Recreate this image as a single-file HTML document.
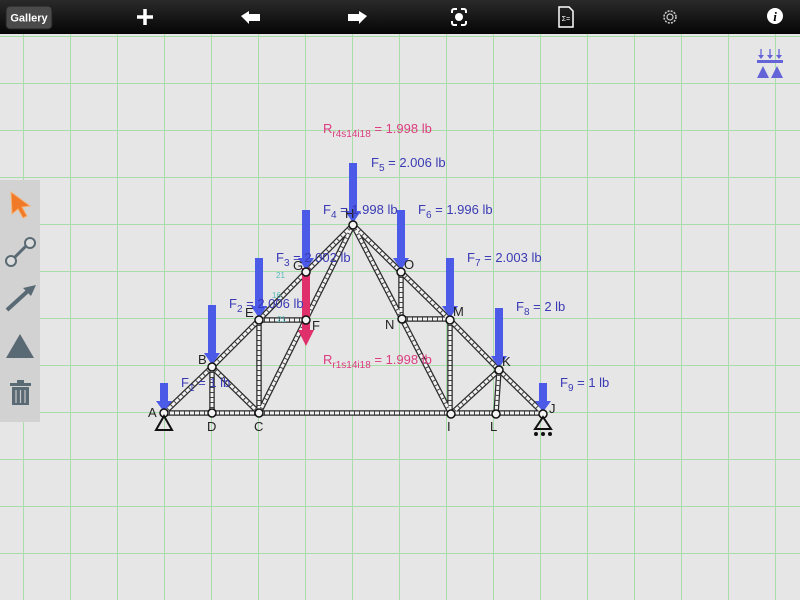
<!DOCTYPE html>
<html><head><meta charset="utf-8"><style>
html,body{margin:0;padding:0;width:800px;height:600px;overflow:hidden;background:#e6e6e6;font-family:"Liberation Sans",sans-serif}
</style></head><body>
<svg width="800" height="600" xmlns="http://www.w3.org/2000/svg" style="position:absolute;left:0;top:0">
<defs>
<linearGradient id="tb" x1="0" y1="0" x2="0" y2="1"><stop offset="0" stop-color="#2a2a2a"/><stop offset="1" stop-color="#050505"/></linearGradient>
<pattern id="grid" x="23" y="36" width="47" height="47" patternUnits="userSpaceOnUse">
<path d="M0.5 0V47M0 0.5H47" stroke="#a8dca8" stroke-width="1" fill="none"/></pattern>
</defs>
<rect width="800" height="600" fill="#e6e6e6"/>
<rect y="33" width="800" height="567" fill="url(#grid)"/>
<!-- toolbar -->
<rect width="800" height="34" fill="url(#tb)"/>
<rect x="6" y="6" width="46" height="23" rx="4" fill="#4a4a4a" stroke="#222"/>
<text x="29" y="21.5" fill="#fff" font-size="11" font-weight="bold" text-anchor="middle">Gallery</text>
<path d="M145 9v16M137 17h16" stroke="#fff" stroke-width="3.5"/>
<path d="M241 16l8-5v3h11v7h-11v3z" fill="#fff"/>
<path d="M367 16l-8-5v3h-11v7h11v3z" fill="#fff"/>
<g fill="none" stroke="#fff" stroke-width="2"><path d="M452 13v-2a2 2 0 0 1 2-2h3M466 13v-2a2 2 0 0 0-2-2h-3M452 21v2a2 2 0 0 0 2 2h3M466 21v2a2 2 0 0 1-2 2h-3"/></g>
<circle cx="459" cy="17" r="4" fill="#fff"/>
<path d="M559 7h10l4 4v16h-14z" fill="none" stroke="#fff" stroke-width="1.5"/>
<text x="566" y="21" fill="#fff" font-size="7" text-anchor="middle">Σ=</text>
<circle cx="670" cy="17" r="6" fill="none" stroke="#ccc" stroke-width="1.5" stroke-dasharray="2 1.2"/>
<circle cx="670" cy="17" r="3" fill="none" stroke="#ccc" stroke-width="1.2"/>
<circle cx="775" cy="16" r="8" fill="#fff"/>
<text x="775" y="21" fill="#000" font-size="13" font-weight="bold" font-style="italic" font-family="Liberation Serif" text-anchor="middle">i</text>
<!-- top right icon -->
<g fill="#6464d8" stroke="#6464d8">
<path d="M761 49v8M770 49v8M779 49v8" stroke-width="1.3"/>
<path d="M758 55l3 4 3-4zM767 55l3 4 3-4zM776 55l3 4 3-4z" stroke="none"/>
<rect x="757" y="60" width="26" height="3" stroke="none"/>
<path d="M757 78l6-12 6 12zM771 78l6-12 6 12z" stroke="none"/>
</g>
<!-- left toolbar -->
<rect x="0" y="180" width="40" height="242" fill="#d2d2d2"/>
<path d="M11 192l19 14-8 1 5 9-4 2-5-9-6 5z" fill="#f07a28" stroke="#f8b070" stroke-width="1"/>
<path d="M12 260l16-16" stroke="#5a6a74" stroke-width="3"/>
<circle cx="11" cy="261" r="5" fill="#ddd" stroke="#5a6a74" stroke-width="2"/>
<circle cx="30" cy="243" r="5" fill="#ddd" stroke="#5a6a74" stroke-width="2"/>
<path d="M7 310l22-20" stroke="#5a6a74" stroke-width="4"/><path d="M36 285l-13 3 8 8z" fill="#5a6a74"/>
<path d="M6 358l14-24 14 24z" fill="#5a6a74"/>
<rect x="10" y="383" width="21" height="3" fill="#5a6a74"/><rect x="17" y="380" width="7" height="3" fill="#5a6a74"/>
<path d="M12 387h17v18h-17z" fill="#5a6a74"/>
<path d="M16 390v13M20.5 390v13M25 390v13" stroke="#c8c8c8" stroke-width="1.2"/>
<!-- members -->
<g fill="none">
<g stroke="#2a2a2a" stroke-width="5.5" stroke-linecap="round">
<path d="M164 413H543M164 413L212 367L259 320L306 272L353 225L401 272L450 320L499 370L543 413M212 367V413M212 367L259 413M259 320V413M259 413L353 225M259 320H306M306 272V320M353 225L402 319L451 414M401 272V319M402 319H450M450 320V414M451 414L499 370M499 370L496 414"/>
</g>
<g stroke="#f2f2f2" stroke-width="3">
<path d="M164 413H543M164 413L212 367L259 320L306 272L353 225L401 272L450 320L499 370L543 413M212 367V413M212 367L259 413M259 320V413M259 413L353 225M259 320H306M306 272V320M353 225L402 319L451 414M401 272V319M402 319H450M450 320V414M451 414L499 370M499 370L496 414"/>
</g>
<g stroke="#444" stroke-width="3" stroke-dasharray="1 4">
<path d="M164 413H543M164 413L212 367L259 320L306 272L353 225L401 272L450 320L499 370L543 413M212 367V413M212 367L259 413M259 320V413M259 413L353 225M259 320H306M306 272V320M353 225L402 319L451 414M401 272V319M402 319H450M450 320V414M451 414L499 370M499 370L496 414"/>
</g>
</g>
<!-- pink reaction -->
<rect x="302" y="268" width="8" height="64" fill="#e0306c"/>
<path d="M298 330h16l-8 16z" fill="#e0306c"/>
<!-- loads -->
<g fill="#4c5ae8">
<rect x="160" y="383" width="8" height="20"/><path d="M156 401h16l-8 11z"/>
<rect x="208" y="305" width="8" height="50"/><path d="M204 353h16l-8 12z"/>
<rect x="255" y="258" width="8" height="50"/><path d="M251 306h16l-8 12z"/>
<rect x="302" y="210" width="8" height="50"/><path d="M298 258h16l-8 12z"/>
<rect x="349" y="163" width="8" height="50"/><path d="M345 211h16l-8 12z"/>
<rect x="397" y="210" width="8" height="50"/><path d="M393 258h16l-8 12z"/>
<rect x="446" y="258" width="8" height="50"/><path d="M442 306h16l-8 12z"/>
<rect x="495" y="308" width="8" height="50"/><path d="M491 356h16l-8 12z"/>
<rect x="539" y="383" width="8" height="20"/><path d="M535 401h16l-8 11z"/>
</g>
<!-- nodes -->
<g fill="#f4f4f4" stroke="#111" stroke-width="1.5">
<circle cx="164" cy="413" r="4"/><circle cx="212" cy="413" r="4"/><circle cx="259" cy="413" r="4"/><circle cx="212" cy="367" r="4"/><circle cx="259" cy="320" r="4"/><circle cx="306" cy="320" r="4"/><circle cx="306" cy="272" r="4"/><circle cx="353" cy="225" r="4"/><circle cx="401" cy="272" r="4"/><circle cx="402" cy="319" r="4"/><circle cx="450" cy="320" r="4"/><circle cx="499" cy="370" r="4"/><circle cx="451" cy="414" r="4"/><circle cx="496" cy="414" r="4"/><circle cx="543" cy="414" r="4"/>
</g>
<!-- supports -->
<path d="M164 416l-8 14h16z" fill="none" stroke="#111" stroke-width="2"/>
<path d="M543 417l-8 12h16z" fill="none" stroke="#111" stroke-width="2"/>
<g fill="#111"><circle cx="536" cy="434" r="2"/><circle cx="543" cy="434" r="2"/><circle cx="550" cy="434" r="2"/></g>
<!-- node labels -->
<g fill="#222" font-size="13">
<text x="148" y="417">A</text><text x="207" y="431">D</text><text x="254" y="431">C</text><text x="198" y="364">B</text><text x="245" y="317">E</text><text x="312" y="330">F</text><text x="293" y="270">G</text><text x="345" y="218">H</text><text x="404" y="269">O</text><text x="385" y="329">N</text><text x="453" y="316">M</text><text x="502" y="366">K</text><text x="447" y="431">I</text><text x="490" y="431">L</text><text x="549" y="413">J</text>
</g>
<!-- force labels -->
<g fill="#3a3ab4" font-size="13">
<text x="181" y="387">F<tspan font-size="10" dy="4">1</tspan><tspan dy="-4"> = 1 lb</tspan></text>
<text x="229" y="308">F<tspan font-size="10" dy="4">2</tspan><tspan dy="-4"> = 2.006 lb</tspan></text>
<text x="276" y="262">F<tspan font-size="10" dy="4">3</tspan><tspan dy="-4"> = 2.002 lb</tspan></text>
<text x="323" y="214">F<tspan font-size="10" dy="4">4</tspan><tspan dy="-4"> = 1.998 lb</tspan></text>
<text x="371" y="167">F<tspan font-size="10" dy="4">5</tspan><tspan dy="-4"> = 2.006 lb</tspan></text>
<text x="418" y="214">F<tspan font-size="10" dy="4">6</tspan><tspan dy="-4"> = 1.996 lb</tspan></text>
<text x="467" y="262">F<tspan font-size="10" dy="4">7</tspan><tspan dy="-4"> = 2.003 lb</tspan></text>
<text x="516" y="311">F<tspan font-size="10" dy="4">8</tspan><tspan dy="-4"> = 2 lb</tspan></text>
<text x="560" y="387">F<tspan font-size="10" dy="4">9</tspan><tspan dy="-4"> = 1 lb</tspan></text>
</g>
<g fill="#dc3c80" font-size="13">
<text x="323" y="133">R<tspan font-size="10" dy="4">r4s14i18</tspan><tspan dy="-4"> = 1.998 lb</tspan></text>
<text x="323" y="364">R<tspan font-size="10" dy="4">r1s14i18</tspan><tspan dy="-4"> = 1.998 lb</tspan></text>
</g>
<g fill="#5bb" font-size="8"><text x="276" y="278">21</text><text x="272" y="298">16</text><text x="277" y="322">21</text></g>
</svg>
</body></html>
